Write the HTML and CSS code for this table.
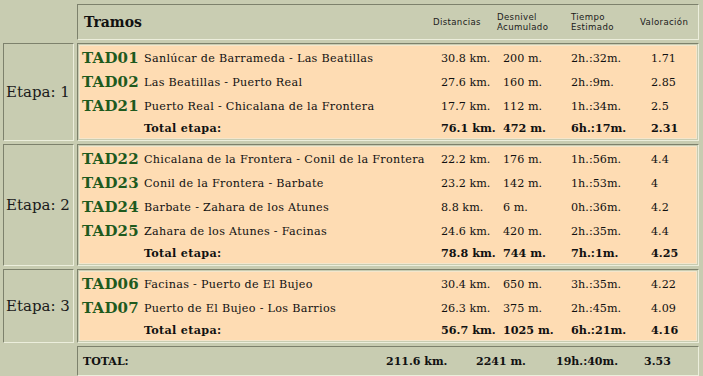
FILE: index.html
```html
<!DOCTYPE html>
<html lang="es">
<head>
<meta charset="utf-8">
<title>Tramos</title>
<link rel="stylesheet" href="styles.css">
</head>
<body>
<div class="board">
  <div class="blank"></div>
  <div class="cell head">
    <div class="hgrid">
      <div class="h-title">Tramos</div>
      <div class="h-lbl">Distancias</div>
      <div class="h-lbl">Desnivel<br>Acumulado</div>
      <div class="h-lbl">Tiempo<br>Estimado</div>
      <div class="h-lbl">Valoración</div>
    </div>
  </div>

  <div class="cell etapa s1">Etapa: 1</div>
  <div class="cell stage">
    <div class="peach">
      <div class="row"><span class="code">TAD01</span><span class="desc">Sanlúcar de Barrameda - Las Beatillas</span><span>30.8 km.</span><span>200 m.</span><span>2h.:32m.</span><span>1.71</span></div>
      <div class="row"><span class="code">TAD02</span><span class="desc">Las Beatillas - Puerto Real</span><span>27.6 km.</span><span>160 m.</span><span>2h.:9m.</span><span>2.85</span></div>
      <div class="row"><span class="code">TAD21</span><span class="desc">Puerto Real - Chicalana de la Frontera</span><span>17.7 km.</span><span>112 m.</span><span>1h.:34m.</span><span>2.5</span></div>
      <div class="row sum"><span></span><span class="desc">Total etapa:</span><span>76.1 km.</span><span>472 m.</span><span>6h.:17m.</span><span>2.31</span></div>
    </div>
  </div>

  <div class="cell etapa s2">Etapa: 2</div>
  <div class="cell stage">
    <div class="peach">
      <div class="row"><span class="code">TAD22</span><span class="desc">Chicalana de la Frontera - Conil de la Frontera</span><span>22.2 km.</span><span>176 m.</span><span>1h.:56m.</span><span>4.4</span></div>
      <div class="row"><span class="code">TAD23</span><span class="desc">Conil de la Frontera - Barbate</span><span>23.2 km.</span><span>142 m.</span><span>1h.:53m.</span><span>4</span></div>
      <div class="row"><span class="code">TAD24</span><span class="desc">Barbate - Zahara de los Atunes</span><span>8.8 km.</span><span>6 m.</span><span>0h.:36m.</span><span>4.2</span></div>
      <div class="row"><span class="code">TAD25</span><span class="desc">Zahara de los Atunes - Facinas</span><span>24.6 km.</span><span>420 m.</span><span>2h.:35m.</span><span>4.4</span></div>
      <div class="row sum"><span></span><span class="desc">Total etapa:</span><span>78.8 km.</span><span>744 m.</span><span>7h.:1m.</span><span>4.25</span></div>
    </div>
  </div>

  <div class="cell etapa s3">Etapa: 3</div>
  <div class="cell stage">
    <div class="peach">
      <div class="row"><span class="code">TAD06</span><span class="desc">Facinas - Puerto de El Bujeo</span><span>30.4 km.</span><span>650 m.</span><span>3h.:35m.</span><span>4.22</span></div>
      <div class="row"><span class="code">TAD07</span><span class="desc">Puerto de El Bujeo - Los Barrios</span><span>26.3 km.</span><span>375 m.</span><span>2h.:45m.</span><span>4.09</span></div>
      <div class="row sum"><span></span><span class="desc">Total etapa:</span><span>56.7 km.</span><span>1025 m.</span><span>6h.:21m.</span><span>4.16</span></div>
    </div>
  </div>

  <div class="blank"></div>
  <div class="cell total">
    <div class="tgrid">
      <span>TOTAL:</span><span>211.6 km.</span><span>2241 m.</span><span>19h.:40m.</span><span>3.53</span>
    </div>
  </div>
</div>
</body>
</html>
```

FILE: styles.css
```css
html, body {
  margin: 0;
  padding: 0;
  background: #c8ccb1;
  overflow: hidden;
}

body {
  font-family: "DejaVu Serif", serif;
  color: #111;
  width: 703px;
  height: 376px;
}

.board {
  display: grid;
  grid-template-columns: 71px 622px;
  column-gap: 3px;
  row-gap: 3px;
  padding: 4px 0 0 3px;
}

.cell {
  box-sizing: border-box;
  border-style: solid;
  border-width: 1px;
  border-color: #7d816c #eceedc #eceedc #7d816c;
}

.head {
  height: 36px;
  padding: 0 0 0 5px;
  display: flex;
  align-items: center;
  background: #c9cdb2;
}

.hgrid {
  display: grid;
  grid-template-columns: 350px 64px 74px 69px 1fr;
  align-items: center;
  width: 100%;
}

.h-title {
  font-weight: bold;
  font-size: 14px;
  padding-left: 1px;
}

.h-lbl {
  font-family: "DejaVu Sans", sans-serif;
  font-size: 8.6px;
  line-height: 10px;
  letter-spacing: 0.35px;
  color: #1a1a1a;
}

.etapa {
  display: flex;
  align-items: center;
  padding-left: 2px;
  font-size: 15px;
  color: #1a1a1a;
}

.stage {
  padding: 1px;
}

.peach {
  background: #fedcb3;
  border: 1px solid #f4e6cc;
  padding-left: 2px;
}

.row {
  display: grid;
  grid-template-columns: 62px 297px 62px 68px 80px 1fr;
  height: 24px;
  align-items: center;
  font-size: 11.2px;
  white-space: nowrap;
}

.row.sum {
  height: 20px;
  font-weight: bold;
}

.desc {
  letter-spacing: 0.3px;
}

.code {
  color: #1e5a1e;
  font-weight: bold;
  font-size: 15px;
  letter-spacing: 0.2px;
}

.total {
  height: 30px;
  padding-left: 5px;
  display: flex;
  align-items: center;
}

.tgrid {
  display: grid;
  grid-template-columns: 303px 90px 80px 88px 1fr;
  font-weight: bold;
  font-size: 11px;
  width: 100%;
  white-space: nowrap;
}
```
